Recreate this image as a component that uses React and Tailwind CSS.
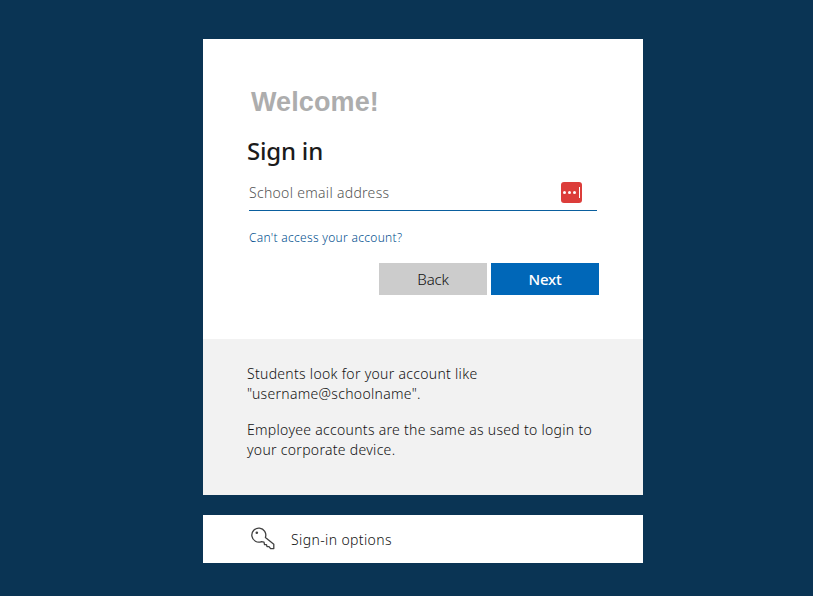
const font = "font-['Noto_Sans',sans-serif]";

function KeyIcon() {
    return (
        <svg width="24" height="24" viewBox="0 0 24 24" fill="none" stroke="#404040" strokeWidth="1.3" strokeLinejoin="round">
            <path d="M10.500 14.600A7 7 0 1 1 14.400 10.500L22.800 17.200V21.600H19.600L18 19.600H16L15.500 17.600H13.500L13 15.200Z" />
            <circle cx="5.800" cy="5.800" r="1.300" fill="#404040" stroke="none" />
        </svg>
    );
}

function DotsIcon() {
    return (
        <div className="flex items-center justify-center gap-[2px] w-[21px] h-[21px] rounded-[3px] bg-[#dc3d3a]">
            <span className="w-[3px] h-[3px] rounded-full bg-white"></span>
            <span className="w-[3px] h-[3px] rounded-full bg-white"></span>
            <span className="w-[3px] h-[3px] rounded-full bg-white"></span>
            <span className="w-px h-[11px] ml-[1px] bg-white"></span>
        </div>
    );
}

function App() {
    return (
        <div className={`flex flex-col items-start min-h-screen pt-[39px] pl-[203px] bg-[#0a3454] ${font}`}>
            <div className="w-[440px] h-[300px] bg-white pt-[44px] px-[44px]">
                <p className="pl-[4px] mt-[1px] h-[36px] font-['Liberation_Sans',sans-serif] font-bold text-[27px] leading-[36px] tracking-[0.1px] text-[#adadad]">Welcome!</p>
                <h1 className="mt-[15px] h-[32px] text-[24px] leading-[32px] font-medium tracking-[-0.2px] text-[#1b1b1b]">Sign in</h1>
                <div className="mt-[12px] ml-[2px] w-[348px] h-[32px] flex items-center justify-between border-b border-[#0a5f9e] pr-[15px] pb-[5px]">
                    <span className="text-[14px] font-light tracking-[0.3px] text-[#555555]">School email address</span>
                    <DotsIcon />
                </div>
                <div className="mt-[19px] ml-[2px] h-[16px] text-[12px] font-light leading-[16px] tracking-[0.3px] text-[#004f8e]">Can't access your account?</div>
                <div className="mt-[17px] w-[352px] flex justify-end gap-[4px]">
                    <div className="w-[108px] h-[32px] flex items-center justify-center bg-[#cccccc] text-[15px] font-light tracking-[-0.2px] text-[#111111]">Back</div>
                    <div className="w-[108px] h-[32px] flex items-center justify-center bg-[#0067b8] text-[15px] font-medium tracking-[-0.2px] text-white">Next</div>
                </div>
            </div>
            <div className="w-[440px] h-[156px] bg-[#f2f2f2] pt-[25px] px-[44px] text-[14px] font-light leading-[20px] tracking-[0.3px] text-[#111111]">
                <p>Students look for your account like<br />"username@schoolname".</p>
                <p className="mt-[16px]">Employee accounts are the same as used to login to your corporate device.</p>
            </div>
            <div className="mt-[20px] w-[440px] h-[48px] bg-white flex items-center pl-[48px]">
                <KeyIcon />
                <span className="ml-[16px] text-[14px] font-light tracking-[0.38px] text-[#111111]">Sign-in options</span>
            </div>
        </div>
    );
}

export default App;
